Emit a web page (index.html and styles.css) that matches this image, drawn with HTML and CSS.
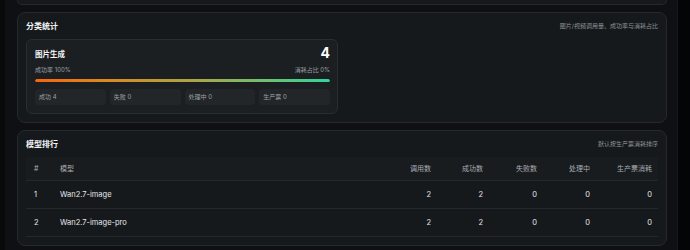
FILE: index.html
```html
<!DOCTYPE html>
<html lang="zh-CN">
<head>
<meta charset="utf-8">
<title>统计</title>
<link rel="stylesheet" href="styles.css">
</head>
<body>
<div class="shell">
  <div class="side"></div>
  <main class="main">
    <section class="card card-stub"></section>

    <section class="card">
      <header class="card-head">
        <h2 class="card-title">分类统计</h2>
        <span class="card-note">图片/视频调用量、成功率与消耗占比</span>
      </header>
      <div class="cat-grid">
        <div class="cat">
          <div class="cat-top">
            <span class="cat-name">图片生成</span>
            <span class="cat-count">4</span>
          </div>
          <div class="cat-meta">
            <span>成功率 100%</span>
            <span>消耗占比 0%</span>
          </div>
          <div class="bar"><div class="bar-fill" style="width:100%"></div></div>
          <div class="chips">
            <span class="chip">成功 4</span>
            <span class="chip">失败 0</span>
            <span class="chip">处理中 0</span>
            <span class="chip">生产票 0</span>
          </div>
        </div>
      </div>
    </section>

    <section class="card">
      <header class="card-head">
        <h2 class="card-title">模型排行</h2>
        <span class="card-note">默认按生产票消耗排序</span>
      </header>
      <table class="rank">
        <colgroup>
          <col class="c-idx"><col class="c-model"><col class="c-a"><col class="c-b"><col class="c-c"><col class="c-d"><col class="c-e">
        </colgroup>
        <thead>
          <tr>
            <th class="l">#</th>
            <th class="l">模型</th>
            <th class="r">调用数</th>
            <th class="r">成功数</th>
            <th class="r">失败数</th>
            <th class="r">处理中</th>
            <th class="r">生产票消耗</th>
          </tr>
        </thead>
        <tbody>
          <tr>
            <td class="l">1</td>
            <td class="l">Wan2.7-image</td>
            <td class="r">2</td>
            <td class="r">2</td>
            <td class="r">0</td>
            <td class="r">0</td>
            <td class="r">0</td>
          </tr>
          <tr>
            <td class="l">2</td>
            <td class="l">Wan2.7-image-pro</td>
            <td class="r">2</td>
            <td class="r">2</td>
            <td class="r">0</td>
            <td class="r">0</td>
            <td class="r">0</td>
          </tr>
        </tbody>
      </table>
    </section>
  </main>
  <div class="track"></div>
</div>
</body>
</html>
```
FILE: styles.css
```css
* { box-sizing: border-box; }

html, body {
  margin: 0;
  height: 250px;
  overflow: hidden;
  background: #0e1013;
  font-family: "Inter", "Noto Sans CJK SC", sans-serif;
  color: #e6e8eb;
}

.shell {
  display: flex;
  height: 250px;
}

.side {
  flex: none;
  width: 5px;
  background: #08090b;
}

.main {
  flex: 1;
  display: flex;
  flex-direction: column;
  gap: 7px;
  padding: 0 10px 0 12px;
  background: #0e1013;
}

.track {
  flex: none;
  width: 13px;
  background: #040506;
  border-left: 1px solid #16181b;
}

.card {
  flex: none;
  background: #16191c;
  border: 1px solid #25282c;
  border-radius: 8px;
  padding: 8px;
}

.card-stub {
  height: 5px;
  padding: 0;
  border-top: 0;
  border-radius: 0 0 8px 8px;
}

.card-head {
  display: flex;
  align-items: center;
  justify-content: space-between;
  height: 10px;
  margin-bottom: 8px;
}

.card-title {
  margin: 0;
  font-size: 8px;
  line-height: 10px;
  font-weight: 700;
  color: #f3f4f6;
}

.card-note {
  font-size: 6px;
  line-height: 10px;
  color: #8d9297;
}

.cat-grid {
  display: grid;
  grid-template-columns: 1fr 1fr;
  gap: 8px;
}

.cat {
  background: #1c1f22;
  border: 1px solid #2a2d31;
  border-radius: 6px;
  padding: 7px 7px 8px 8px;
}

.cat-top {
  display: flex;
  align-items: center;
  justify-content: space-between;
  height: 12px;
}

.cat-name {
  font-size: 7.5px;
  font-weight: 700;
  color: #f3f4f6;
}

.cat-count {
  font-size: 14px;
  line-height: 12px;
  font-weight: 700;
  color: #ffffff;
}

.cat-meta {
  display: flex;
  justify-content: space-between;
  margin-top: 6px;
  height: 9px;
  font-size: 6px;
  line-height: 9px;
  color: #9aa0a6;
}

.bar {
  margin-top: 5px;
  height: 3px;
  border-radius: 2px;
  background: #2a2d31;
  overflow: hidden;
}

.bar-fill {
  height: 100%;
  border-radius: 2px;
  background: linear-gradient(90deg, #f8650c 0%, #d98a22 25%, #a7a648 55%, #6fc071 78%, #2fd39b 100%);
}

.chips {
  display: grid;
  grid-template-columns: repeat(4, 1fr);
  gap: 4px;
  margin-top: 7px;
}

.chip {
  height: 16px;
  padding-left: 4px;
  border-radius: 4px;
  background: #232629;
  font-size: 6px;
  line-height: 16px;
  color: #9aa0a6;
}

.rank {
  width: 100%;
  table-layout: fixed;
  border-collapse: collapse;
}

.c-idx { width: 26px; }
.c-a { width: 53px; }
.c-b { width: 52px; }
.c-c { width: 54px; }
.c-d { width: 53px; }
.c-e { width: 62px; }

.rank th {
  height: 23px;
  font-size: 7px;
  font-weight: 400;
  color: #a9adb2;
  background: #191c1f;
  border-bottom: 1px solid #24272b;
}

.rank td {
  height: 28px;
  font-size: 7.5px;
  color: #e6e8eb;
  border-bottom: 1px solid #24272b;
}

.rank .l { text-align: left; padding: 0 0 0 8px; }
.rank .r { text-align: right; padding: 0 6px 0 0; }
```
